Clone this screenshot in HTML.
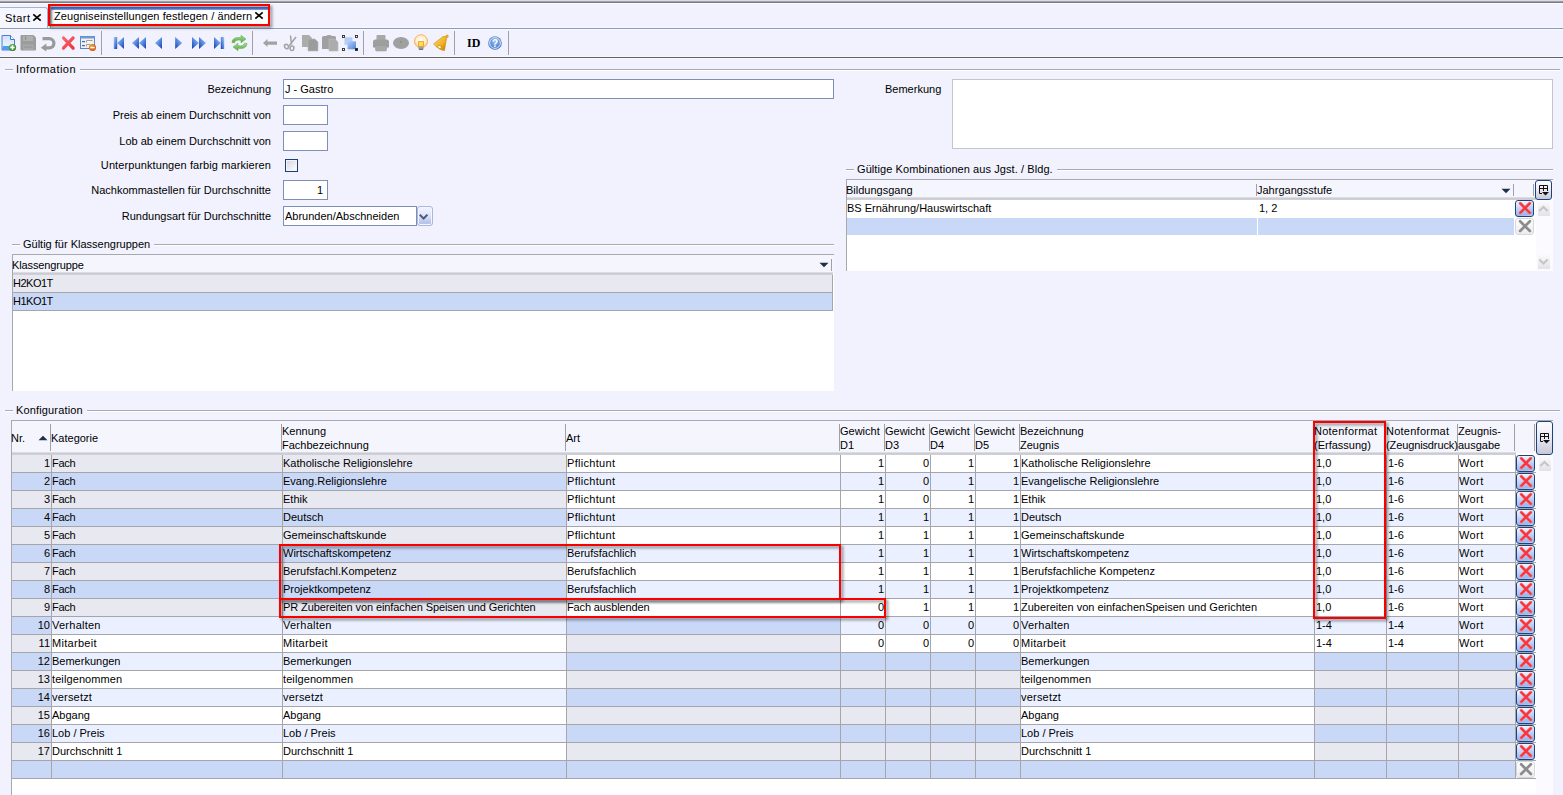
<!DOCTYPE html>
<html lang="de"><head><meta charset="utf-8"><title>Zeugniseinstellungen festlegen / ändern</title>
<style>
*{box-sizing:border-box;margin:0;padding:0}
html,body{width:1563px;height:795px;overflow:hidden;background:#f1f2fd}
body{position:relative;font-family:"Liberation Sans",sans-serif;font-size:11px;color:#000;line-height:13px}
.a{position:absolute;white-space:nowrap}
.lbl{position:absolute;white-space:nowrap;text-align:right;right:1292px}
.inp{position:absolute;background:#fff;border:1px solid #7b8fb8;height:20px}
.gl{position:absolute;height:2px;background:linear-gradient(#a9a9b1 50%,#fff 50%)}
.gt{position:absolute;white-space:nowrap;background:#f1f2fd;padding:0 4px 0 3px}
.c{position:absolute;height:17px;line-height:17px;white-space:nowrap;overflow:hidden;padding-left:0}
.r{text-align:right;padding-right:1px;padding-left:0}
.vl{position:absolute;width:1px;background:#a6a6aa}
.hl{position:absolute;height:1px;background:#a6a6aa}
.red{position:absolute;border:2px solid #f80000;filter:drop-shadow(2px 2px 1.5px rgba(0,0,0,.5))}
.hs{position:absolute;width:1px;background:#a0a0a8}
</style></head>
<body>
<div class="a" style="left:0;top:0;width:1563px;height:1px;background:#dcdae8"></div>
<div class="a" style="left:0;top:1px;width:1563px;height:1px;background:#a2a2a6"></div>
<div class="a" style="left:0;top:2px;width:1563px;height:1px;background:#7c7c7e"></div>
<div class="a" style="left:0;top:3px;width:1563px;height:1px;background:#fafaff"></div>
<div class="a" style="left:0;top:27px;width:1563px;height:3px;background:#f8f8ff"></div>
<div class="a" style="left:0;top:28px;width:1563px;height:1px;background:#8a9dba"></div>
<div class="a" style="left:-1px;top:7px;width:49px;height:21px;border:1px solid #9fb4d0;border-bottom:none;border-radius:0 3px 0 0;background:#f6f6fe"></div>
<div class="a" style="left:5px;top:12px;letter-spacing:.45px">Start</div>
<svg class="a" style="left:32px;top:13px" width="10" height="10" viewBox="0 0 10 10"><path d="M1.3 1.3L8.7 7.700M8.700 1.300L1.300 7.700" stroke="#000" stroke-width="1.700" fill="none"/></svg>
<div class="a" style="left:50px;top:6px;width:220px;height:22px;background:#dde3e3"></div>
<div class="a" style="left:50px;top:6px;width:219px;height:20px;background:#fff"></div>
<div class="a" style="left:50px;top:6px;width:219px;height:1px;background:#e0e4f0"></div>
<div class="a" style="left:50px;top:7px;width:219px;height:3px;background:linear-gradient(#5577dc,#5f83e2 55%,#97b3f4)"></div>
<div class="a" style="left:50px;top:6px;width:1px;height:22px;background:#9a9ea8"></div>
<div class="a" style="left:51px;top:10px;width:1px;height:16px;background:#d8dade"></div>
<div class="a" style="left:54px;top:10px;letter-spacing:.08px">Zeugniseinstellungen festlegen / ändern</div>
<svg class="a" style="left:254px;top:11px" width="10" height="10" viewBox="0 0 10 10"><path d="M1.300 1.300L8.700 7.700M8.700 1.300L1.300 7.700" stroke="#000" stroke-width="1.700" fill="none"/></svg>
<div class="red" style="left:48px;top:4px;width:222px;height:22px"></div>
<div class="a" style="left:0;top:56px;width:1563px;height:3px;background:#f8f8ff"></div>
<div class="a" style="left:0;top:57px;width:1563px;height:1px;background:#626264"></div>
<div class="a" style="left:101px;top:31px;width:1px;height:24px;background:#a0a0a6"></div>
<div class="a" style="left:252px;top:31px;width:1px;height:24px;background:#a0a0a6"></div>
<div class="a" style="left:363px;top:31px;width:1px;height:24px;background:#a0a0a6"></div>
<div class="a" style="left:454px;top:31px;width:1px;height:24px;background:#a0a0a6"></div>
<div class="a" style="left:508px;top:31px;width:1px;height:24px;background:#a0a0a6"></div>
<svg class="a" style="left:0;top:30px" width="520" height="26" viewBox="0 30 520 26">
<defs>
<linearGradient id="gdoc" x1="0" y1="0" x2="0" y2="1"><stop offset="0" stop-color="#cfe2fa"/><stop offset=".7" stop-color="#e8f2fd"/><stop offset="1" stop-color="#5aa8f0"/></linearGradient>
<linearGradient id="gnav" x1="0" y1="0" x2="1" y2="1"><stop offset="0" stop-color="#a8c8f4"/><stop offset=".5" stop-color="#5a8ee0"/><stop offset="1" stop-color="#1838b0"/></linearGradient>
<linearGradient id="gnavr" x1="1" y1="0" x2="0" y2="1"><stop offset="0" stop-color="#a8c8f4"/><stop offset=".5" stop-color="#5a8ee0"/><stop offset="1" stop-color="#1838b0"/></linearGradient>
<radialGradient id="ggrn" cx=".4" cy=".35" r=".7"><stop offset="0" stop-color="#7cc060"/><stop offset="1" stop-color="#2a7a1a"/></radialGradient>
<radialGradient id="gorg" cx=".4" cy=".35" r=".7"><stop offset="0" stop-color="#f8a040"/><stop offset="1" stop-color="#c85000"/></radialGradient>
<linearGradient id="gred" x1="0" y1="0" x2="1" y2="1"><stop offset="0" stop-color="#ff8a90"/><stop offset="1" stop-color="#ee2028"/></linearGradient>
<linearGradient id="gsel" x1="0" y1="0" x2="1" y2="1"><stop offset="0" stop-color="#b8d0f8"/><stop offset="1" stop-color="#4a80e0"/></linearGradient>
<radialGradient id="gbulb" cx=".5" cy=".45" r=".6"><stop offset="0" stop-color="#ffffff"/><stop offset=".6" stop-color="#fff0c8"/><stop offset="1" stop-color="#f0a850"/></radialGradient>
<linearGradient id="gbell" x1="0" y1="0" x2="1" y2="1"><stop offset="0" stop-color="#ffe070"/><stop offset=".6" stop-color="#f0b020"/><stop offset="1" stop-color="#b87800"/></linearGradient>
<radialGradient id="ghelp" cx=".5" cy=".4" r=".6"><stop offset="0" stop-color="#9cc0f0"/><stop offset="1" stop-color="#3a70c8"/></radialGradient>
<linearGradient id="ggreen" x1="0" y1="0" x2="0" y2="1"><stop offset="0" stop-color="#a4dc8c"/><stop offset="1" stop-color="#56aa48"/></linearGradient>
</defs>
<!-- new doc -->
<path d="M2 35.500H10.500L14.500 39.500V50H2Z" fill="url(#gdoc)" stroke="#4a80d4" stroke-width="1" stroke-linejoin="round"/>
<path d="M10.5 35.5V39.5H14.5" fill="#fff" stroke="#3a78d0" stroke-width="1"/>
<rect x="3" y="46" width="7" height="3" fill="#48a0f0"/>
<circle cx="12.5" cy="47.5" r="3.6" fill="url(#ggrn)"/>
<path d="M12.5 45.3V49.7M10.3 47.5H14.7" stroke="#fff" stroke-width="1.5"/>
<!-- save -->
<path d="M20.5 36Q20.5 35 21.5 35H33.5L36 37.5V49.5Q36 50.5 35 50.5H21.5Q20.5 50.5 20.5 49.5Z" fill="#9c9c9c"/>
<rect x="23" y="36" width="10" height="5" fill="#b0b0b0"/><rect x="25" y="36.5" width="1.2" height="3.2" fill="#8a8a8a"/>
<rect x="23" y="44.5" width="10.5" height="5.5" fill="#a8a8a8"/><rect x="24" y="46.5" width="8.5" height="1" fill="#949494"/>
<!-- undo -->
<path d="M42.500 38.700H49.300A4.600 4.600 0 0 1 49.300 47.900H46" fill="none" stroke="#9a9a9a" stroke-width="3.300"/>
<path d="M40.800 47.700L46.300 43.400V51.500Z" fill="#9a9a9a"/>
<!-- red X -->
<path d="M63.5 38L73 48M73 38L63.5 48" stroke="url(#gred)" stroke-width="3.2" stroke-linecap="round"/>
<path d="M63.5 38L73 48M73 38L63.5 48" stroke="#f6484e" stroke-width="3.2" stroke-linecap="round" opacity=".5"/>
<!-- form minus -->
<rect x="80.5" y="36.5" width="14" height="12" fill="#f4f0e6" stroke="#5a88d0" stroke-width="1"/>
<rect x="80.5" y="36.5" width="14" height="2" fill="#6a9ce0"/>
<rect x="82" y="41" width="3" height="1.2" fill="#3a68c8"/><rect x="82" y="45" width="3" height="1.2" fill="#3a68c8"/>
<path d="M86.5 42.5V40.5H92.5M86.5 46.5V44.5H90" stroke="#a0a0a0" stroke-width="1" fill="#fff"/>
<circle cx="92.5" cy="47.5" r="3.5" fill="url(#gorg)"/><rect x="90.3" y="46.8" width="4.4" height="1.5" fill="#fff"/>
<!-- nav -->
<rect x="113.8" y="37" width="3.4" height="12" fill="url(#gnav)"/><path d="M124 37V49L117.2 43Z" fill="url(#gnav)"/>
<path d="M139 37V49L132 43Z" fill="url(#gnav)"/><path d="M146 37V49L139 43Z" fill="url(#gnav)"/>
<path d="M162 37V49L155 43Z" fill="url(#gnav)"/>
<path d="M175.2 37V49L182.2 43Z" fill="url(#gnavr)"/>
<path d="M192 37V49L199 43Z" fill="url(#gnavr)"/><path d="M199 37V49L206 43Z" fill="url(#gnavr)"/>
<path d="M214 37V49L220.8 43Z" fill="url(#gnavr)"/><rect x="220.8" y="37" width="3.4" height="12" fill="url(#gnavr)"/>
<!-- refresh -->
<path d="M232 42.5C232 38.5 236 36.8 241 37.8V35.3L246 39L241 42.8V40.4C237.5 39.6 235 40.5 234.6 42.8Z" fill="url(#ggreen)" stroke="#58a84c" stroke-width=".5"/>
<path d="M247 43.5C247 47.5 243 49.2 238 48.2V50.7L233 47L238 43.2V45.6C241.500 46.4 244 45.5 244.400 43.200Z" fill="url(#ggreen)" stroke="#58a84c" stroke-width=".5"/>
<!-- left arrow -->
<path d="M263 43L267.500 39V41.500H277V44.700H267.500V47Z" fill="#a2a2a2"/>
<!-- scissors -->
<path d="M290.500 35.500L291.500 44.500M296 37L289 46" stroke="#a2a2a2" stroke-width="1.500" fill="none"/>
<ellipse cx="286.500" cy="46.500" rx="1.900" ry="2.300" fill="none" stroke="#a2a2a2" stroke-width="1.500" transform="rotate(-30 286.500 46.500)"/>
<ellipse cx="292" cy="48.300" rx="1.900" ry="2.300" fill="none" stroke="#a2a2a2" stroke-width="1.500" transform="rotate(10 292 48.300)"/>
<!-- copy -->
<path d="M302 35H309L312 38V47H302Z" fill="#acacac"/>
<path d="M308 39H315L318 42V51H308Z" fill="#9c9c9c" stroke="#b8b8b8" stroke-width=".6"/>
<!-- paste -->
<path d="M322 37.500Q322 36 324 36H326Q327 35 329 35Q331 35 332 36H334Q336 36 336 37.500V49H322Z" fill="#a0a0a0"/>
<path d="M329 39H335L338 42V51H329Z" fill="#acacac" stroke="#bcbcbc" stroke-width=".6"/>
<!-- select -->
<rect x="344.500" y="37.300" width="8" height="7.500" fill="#b4ccf6"/><rect x="347.500" y="41.300" width="8.500" height="8" fill="url(#gsel)"/>
<g fill="#fff" stroke="#2a2a2a" stroke-width=".9"><rect x="342.500" y="35.500" width="2" height="2"/><rect x="355.500" y="35.500" width="2" height="2"/><rect x="342.500" y="48.500" width="2" height="2"/><rect x="355.500" y="48.500" width="2" height="2" fill="#111"/></g>
<!-- printer -->
<path d="M376.500 36Q376.500 35 377.500 35H384.500Q385.500 35 385.500 36V40H376.500Z" fill="#a8a8a8"/>
<path d="M373 42Q373 39.500 375.500 39.500H386.500Q389 39.500 389 42V47.500H373Z" fill="#9e9e9e"/>
<path d="M375.500 45.500H386.500V50Q386.500 51 385.500 51H376.500Q375.500 51 375.500 50Z" fill="#a8a8a8" stroke="#949494" stroke-width=".5"/>
<!-- ellipse -->
<ellipse cx="401" cy="43" rx="8" ry="6" fill="#a0a0a0"/><circle cx="401" cy="42" r=".9" fill="#888"/>
<!-- bulb -->
<circle cx="421" cy="41.300" r="6.600" fill="url(#gbulb)" stroke="#f4b070" stroke-width=".9"/>
<path d="M418.500 41.500H423.500V46.500H418.500Z" fill="#ffe048" stroke="#f09030" stroke-width=".8"/>
<rect x="418.500" y="46.500" width="5" height="3" fill="#a0a0a0"/><rect x="419" y="48.800" width="4" height="1" fill="#606060"/>
<!-- bell -->
<path d="M433.500 44L443 36.500Q446 35.800 446.500 38.500L444.500 50.500Q440 50.800 433.500 44Z" fill="url(#gbell)" stroke="#c88a10" stroke-width=".6"/>
<circle cx="447" cy="36.300" r="1.300" fill="#f0b020" stroke="#c88a10" stroke-width=".5"/>
<ellipse cx="439.500" cy="47" rx="2" ry="1.400" fill="#fff4c0" stroke="#b87800" stroke-width=".5" transform="rotate(40 439.500 47)"/>
<!-- help -->
<circle cx="495" cy="43" r="6.800" fill="url(#ghelp)"/><circle cx="495" cy="43" r="5.400" fill="none" stroke="#e8f0fc" stroke-width=".9"/>
<text x="495" y="46.800" font-family="Liberation Sans, sans-serif" font-weight="bold" font-size="10" text-anchor="middle" fill="#fff">?</text>
</svg>
<div class="a" style="left:467px;top:36px;font:bold 12px 'Liberation Serif',serif;line-height:14px;color:#000">ID</div>

<div class="gl" style="left:5px;top:69px;width:1555px"></div>
<div class="gt" style="left:13px;top:63px;letter-spacing:0.45px">Information</div>
<div class="lbl" style="top:83px">Bezeichnung</div>
<div class="lbl" style="top:109px">Preis ab einem Durchschnitt von</div>
<div class="lbl" style="top:135px">Lob ab einem Durchschnitt von</div>
<div class="lbl" style="top:159px;letter-spacing:.1px">Unterpunktungen farbig markieren</div>
<div class="lbl" style="top:184px">Nachkommastellen für Durchschnitte</div>
<div class="lbl" style="top:210px">Rundungsart für Durchschnitte</div>
<div class="inp" style="left:283px;top:79px;width:551px"></div>
<div class="a" style="left:285px;top:83px">J - Gastro</div>
<div class="inp" style="left:283px;top:105px;width:45px"></div>
<div class="inp" style="left:283px;top:131px;width:45px"></div>
<div class="a" style="left:285px;top:159px;width:13px;height:13px;border:1px solid #1c3d78;background:linear-gradient(135deg,#d4d4da,#fafafc 85%);box-shadow:inset 0 0 0 1px #f4f4f8"></div>
<div class="inp" style="left:283px;top:180px;width:45px"></div>
<div class="a" style="left:283px;top:184px;width:40px;text-align:right">1</div>
<div class="inp" style="left:283px;top:206px;width:134px"></div>
<div class="a" style="left:285px;top:210px">Abrunden/Abschneiden</div>
<div class="a" style="left:417px;top:206px;width:16px;height:20px;border:1px solid #aab6dc;border-radius:3px;background:linear-gradient(#f2f4ff,#dfe5fa 45%,#b4c2e8 90%,#c8d2f0);box-shadow:inset 0 0 0 1px #f4f6ff"></div>
<svg class="a" style="left:419px;top:213px" width="10" height="8" viewBox="0 0 10 8"><path d="M0.800 1.600L4.600 5.600L8.400 1.600" stroke="#4a587c" stroke-width="2.100" fill="none"/></svg>
<div class="a" style="left:885px;top:83px">Bemerkung</div>
<div class="a" style="left:952px;top:79px;width:601px;height:70px;background:#fff;border:1px solid #c4c4cc"></div>
<div class="gl" style="left:12px;top:244px;width:822px"></div>
<div class="gt" style="left:20px;top:238px;letter-spacing:0px">Gültig für Klassengruppen</div>
<div class="a" style="left:12px;top:254px;width:822px;height:137px;background:#fff;border-left:1px solid #a9a9ad;border-top:1px solid #a9a9ad"></div>
<div class="a" style="left:13px;top:255px;width:821px;height:18px;background:#f5f5fe"></div>
<div class="a" style="left:13px;top:272px;width:820px;height:3px;background:linear-gradient(#e4e4ec,#cbcbd2 50%,#c8c8ce 70%,#d8d8de)"></div>
<div class="a" style="left:12px;top:259px;letter-spacing:-.13px">Klassengruppe</div>
<div class="hs" style="left:831px;top:259px;height:12px"></div>
<svg class="a" style="left:819px;top:262px" width="10" height="6" viewBox="0 0 10 6"><path d="M0.5 0.8L9.5 0.8L5 5.2Z" fill="#1c3048"/></svg>
<div class="c" style="left:13px;top:275px;width:819px;background:#e8e8f1;letter-spacing:-.5px">H2KO1T</div>
<div class="c" style="left:13px;top:293px;width:819px;background:#c9d8f6;letter-spacing:-.5px">H1KO1T</div>
<div class="hl" style="left:13px;top:292px;width:820px"></div>
<div class="hl" style="left:13px;top:310px;width:820px"></div>
<div class="vl" style="left:832px;top:275px;height:36px"></div>
<div class="gl" style="left:846px;top:169px;width:707px"></div>
<div class="gt" style="left:854px;top:163px;letter-spacing:0.08px">Gültige Kombinationen aus Jgst. / Bldg.</div>
<div class="a" style="left:846px;top:179px;width:707px;height:92px;background:#fff;border-left:1px solid #a9a9ad;border-top:1px solid #a9a9ad"></div>
<div class="a" style="left:847px;top:180px;width:706px;height:18px;background:#f5f5fe"></div>
<div class="a" style="left:847px;top:197px;width:689px;height:3px;background:linear-gradient(#e4e4ec,#cbcbd2 50%,#c8c8ce 70%,#d8d8de)"></div>
<div class="a" style="left:846px;top:184px">Bildungsgang</div>
<div class="a" style="left:1257px;top:184px">Jahrgangsstufe</div>
<div class="hs" style="left:1256px;top:184px;height:12px"></div>
<div class="hs" style="left:1513px;top:184px;height:12px"></div>
<div class="hs" style="left:1533px;top:184px;height:12px"></div>
<svg class="a" style="left:1501px;top:188px" width="10" height="6" viewBox="0 0 10 6"><path d="M0.5 0.8L9.5 0.8L5 5.2Z" fill="#1c3048"/></svg>
<div class="c" style="left:847px;top:200px;width:410px;height:18px;background:#fff">BS Ernährung/Hauswirtschaft</div>
<div class="c" style="left:1258px;top:200px;width:256px;height:18px;background:#fff;padding-left:1px">1, 2</div>
<div class="c" style="left:847px;top:218px;width:410px;background:#c9d8f6"></div>
<div class="c" style="left:1258px;top:218px;width:256px;background:#c9d8f6"></div>
<div class="a" style="left:1515px;top:200px;width:19px;height:17px;border:1px solid #1c4280;border-radius:3px;background:linear-gradient(172deg,#f6f8ff 4%,#c6d6f7 42%,#9ab6ee 86%,#c4d6fa)"></div>
<svg class="a" style="left:1517px;top:201px" width="16" height="15" viewBox="0 0 16 15"><path d="M3.100 2.200L12.900 12M12.900 2.200L3.100 12" stroke="#ff8890" stroke-width="3.200" stroke-linecap="round" fill="none" opacity=".8"/><path d="M3.300 2.400L12.700 11.800M12.700 2.400L3.300 11.800" stroke="#f6363e" stroke-width="2.300" stroke-linecap="round" fill="none"/></svg>
<div class="a" style="left:1515px;top:218px;width:19px;height:17px;border:1px solid #d6d6dc;border-radius:3px;background:linear-gradient(#ffffff,#ececf0)"></div>
<svg class="a" style="left:1517px;top:219px" width="16" height="15" viewBox="0 0 16 15"><path d="M3.100 2.200L12.900 12M12.900 2.200L3.100 12" stroke="#8c8c8c" stroke-width="2.700" stroke-linecap="round" fill="none"/></svg>
<div class="a" style="left:1536px;top:200px;width:17px;height:71px;background:#fafaff"></div>
<div class="a" style="left:1538px;top:201px;width:12px;height:15px;background:linear-gradient(#fbfbfd,#e3e3e7)"></div>
<svg class="a" style="left:1538px;top:201px" width="12" height="15" viewBox="0 0 12 15"><path d="M1.300 10L5.500 6L9.700 10" stroke="#c6c6c8" stroke-width="2.200" fill="none"/></svg>
<div class="a" style="left:1538px;top:254px;width:12px;height:15px;background:linear-gradient(#fbfbfd,#e3e3e7)"></div>
<svg class="a" style="left:1538px;top:254px" width="12" height="15" viewBox="0 0 12 15"><path d="M1.300 5.500L5.500 9.500L9.700 5.500" stroke="#c6c6c8" stroke-width="2.200" fill="none"/></svg>
<div class="a" style="left:1535px;top:180px;width:17px;height:20px;border:1px solid #1c4280;border-radius:3px;background:linear-gradient(#fcfcfe,#ececf4 45%,#c8c8d8)"></div>
<svg class="a" style="left:1539px;top:185px" width="10" height="11" viewBox="0 0 10 11"><path d="M0.5 0.5H8.5V6M0.5 0.5V8.5H3M0.5 3.5H8.5M4.5 0.5V6" stroke="#111" stroke-width="1" fill="none"/><path d="M3 7H10L6.5 10.5Z" fill="#111"/></svg>
<div class="gl" style="left:5px;top:410px;width:1555px"></div>
<div class="gt" style="left:13px;top:404px;letter-spacing:0.15px">Konfiguration</div>
<div class="a" style="left:11px;top:420px;width:1542px;height:375px;background:#fff;border-left:1px solid #a9a9ad;border-top:1px solid #a9a9ad"></div>
<div class="a" style="left:12px;top:421px;width:1524px;height:32px;background:#f5f5fe"></div>
<div class="a" style="left:12px;top:452px;width:1504px;height:3px;background:linear-gradient(#e4e4ec,#cbcbd2 50%,#c8c8ce 70%,#d8d8de)"></div>
<div class="hs" style="left:50px;top:424px;height:27px"></div>
<div class="hs" style="left:281px;top:424px;height:27px"></div>
<div class="hs" style="left:565px;top:424px;height:27px"></div>
<div class="hs" style="left:839px;top:424px;height:27px"></div>
<div class="hs" style="left:884px;top:424px;height:27px"></div>
<div class="hs" style="left:929px;top:424px;height:27px"></div>
<div class="hs" style="left:974px;top:424px;height:27px"></div>
<div class="hs" style="left:1019px;top:424px;height:27px"></div>
<div class="hs" style="left:1313px;top:424px;height:27px"></div>
<div class="hs" style="left:1385px;top:424px;height:27px"></div>
<div class="hs" style="left:1457px;top:424px;height:27px"></div>
<div class="hs" style="left:1514px;top:424px;height:27px"></div>
<div class="hs" style="left:1534px;top:424px;height:27px"></div>
<div class="a" style="left:11px;top:432px">Nr.</div>
<svg class="a" style="left:38px;top:435px" width="10" height="6" viewBox="0 0 10 6"><path d="M0.5 5.2L9.5 5.2L5 0.8Z" fill="#1c3048"/></svg>
<div class="a" style="left:51px;top:432px">Kategorie</div>
<div class="a" style="left:282px;top:425px">Kennung</div>
<div class="a" style="left:282px;top:439px">Fachbezeichnung</div>
<div class="a" style="left:566px;top:432px">Art</div>
<div class="a" style="left:840px;top:425px">Gewicht</div>
<div class="a" style="left:840px;top:439px">D1</div>
<div class="a" style="left:885px;top:425px">Gewicht</div>
<div class="a" style="left:885px;top:439px">D3</div>
<div class="a" style="left:930px;top:425px">Gewicht</div>
<div class="a" style="left:930px;top:439px">D4</div>
<div class="a" style="left:975px;top:425px">Gewicht</div>
<div class="a" style="left:975px;top:439px">D5</div>
<div class="a" style="left:1020px;top:425px">Bezeichnung</div>
<div class="a" style="left:1020px;top:439px">Zeugnis</div>
<div class="a" style="left:1314px;top:425px"><span style="letter-spacing:.25px">Notenformat</span></div>
<div class="a" style="left:1314px;top:439px">(Erfassung)</div>
<div class="a" style="left:1386px;top:425px"><span style="letter-spacing:.25px">Notenformat</span></div>
<div class="a" style="left:1386px;top:439px"><span style="letter-spacing:-.12px">(Zeugnisdruck)</span></div>
<div class="a" style="left:1458px;top:425px">Zeugnis-</div>
<div class="a" style="left:1458px;top:439px">ausgabe</div>
<div class="c r" style="left:12px;top:455px;width:39px;background:#e8e8f1">1</div>
<div class="c" style="left:52px;top:455px;width:230px;background:#e8e8f1;letter-spacing:-0.25px">Fach</div>
<div class="c" style="left:283px;top:455px;width:283px;background:#e8e8f1">Katholische Religionslehre</div>
<div class="c" style="left:567px;top:455px;width:273px;background:#ffffff;letter-spacing:0.3px">Pflichtunt</div>
<div class="c r" style="left:841px;top:455px;width:44px;background:#ffffff">1</div>
<div class="c r" style="left:886px;top:455px;width:44px;background:#ffffff">0</div>
<div class="c r" style="left:931px;top:455px;width:44px;background:#ffffff">1</div>
<div class="c r" style="left:976px;top:455px;width:44px;background:#ffffff">1</div>
<div class="c" style="left:1021px;top:455px;width:293px;background:#ffffff">Katholische Religionslehre</div>
<div class="c" style="left:1315px;top:455px;width:71px;background:#ffffff;padding-left:1px">1,0</div>
<div class="c" style="left:1387px;top:455px;width:71px;background:#ffffff;padding-left:1px">1-6</div>
<div class="c" style="left:1459px;top:455px;width:56px;background:#ffffff;letter-spacing:0.4px">Wort</div>
<div class="hl" style="left:12px;top:472px;width:1524px"></div>
<div class="a" style="left:1516px;top:455px;width:19px;height:17px;border:1px solid #1c4280;border-radius:3px;background:linear-gradient(172deg,#f6f8ff 4%,#c6d6f7 42%,#9ab6ee 86%,#c4d6fa)"></div>
<svg class="a" style="left:1518px;top:456px" width="16" height="15" viewBox="0 0 16 15"><path d="M3.100 2.200L12.900 12M12.900 2.200L3.100 12" stroke="#ff8890" stroke-width="3.200" stroke-linecap="round" fill="none" opacity=".8"/><path d="M3.300 2.400L12.700 11.800M12.700 2.400L3.300 11.800" stroke="#f6363e" stroke-width="2.300" stroke-linecap="round" fill="none"/></svg>
<div class="c r" style="left:12px;top:473px;width:39px;background:#c9d8f6">2</div>
<div class="c" style="left:52px;top:473px;width:230px;background:#c9d8f6;letter-spacing:-0.25px">Fach</div>
<div class="c" style="left:283px;top:473px;width:283px;background:#c9d8f6">Evang.Religionslehre</div>
<div class="c" style="left:567px;top:473px;width:273px;background:#eaf0ff;letter-spacing:0.3px">Pflichtunt</div>
<div class="c r" style="left:841px;top:473px;width:44px;background:#eaf0ff">1</div>
<div class="c r" style="left:886px;top:473px;width:44px;background:#eaf0ff">0</div>
<div class="c r" style="left:931px;top:473px;width:44px;background:#eaf0ff">1</div>
<div class="c r" style="left:976px;top:473px;width:44px;background:#eaf0ff">1</div>
<div class="c" style="left:1021px;top:473px;width:293px;background:#eaf0ff">Evangelische Religionslehre</div>
<div class="c" style="left:1315px;top:473px;width:71px;background:#eaf0ff;padding-left:1px">1,0</div>
<div class="c" style="left:1387px;top:473px;width:71px;background:#eaf0ff;padding-left:1px">1-6</div>
<div class="c" style="left:1459px;top:473px;width:56px;background:#eaf0ff;letter-spacing:0.4px">Wort</div>
<div class="hl" style="left:12px;top:490px;width:1524px"></div>
<div class="a" style="left:1516px;top:473px;width:19px;height:17px;border:1px solid #1c4280;border-radius:3px;background:linear-gradient(172deg,#f6f8ff 4%,#c6d6f7 42%,#9ab6ee 86%,#c4d6fa)"></div>
<svg class="a" style="left:1518px;top:474px" width="16" height="15" viewBox="0 0 16 15"><path d="M3.100 2.200L12.900 12M12.900 2.200L3.100 12" stroke="#ff8890" stroke-width="3.200" stroke-linecap="round" fill="none" opacity=".8"/><path d="M3.300 2.400L12.700 11.800M12.700 2.400L3.300 11.800" stroke="#f6363e" stroke-width="2.300" stroke-linecap="round" fill="none"/></svg>
<div class="c r" style="left:12px;top:491px;width:39px;background:#e8e8f1">3</div>
<div class="c" style="left:52px;top:491px;width:230px;background:#e8e8f1;letter-spacing:-0.25px">Fach</div>
<div class="c" style="left:283px;top:491px;width:283px;background:#e8e8f1">Ethik</div>
<div class="c" style="left:567px;top:491px;width:273px;background:#ffffff;letter-spacing:0.3px">Pflichtunt</div>
<div class="c r" style="left:841px;top:491px;width:44px;background:#ffffff">1</div>
<div class="c r" style="left:886px;top:491px;width:44px;background:#ffffff">0</div>
<div class="c r" style="left:931px;top:491px;width:44px;background:#ffffff">1</div>
<div class="c r" style="left:976px;top:491px;width:44px;background:#ffffff">1</div>
<div class="c" style="left:1021px;top:491px;width:293px;background:#ffffff">Ethik</div>
<div class="c" style="left:1315px;top:491px;width:71px;background:#ffffff;padding-left:1px">1,0</div>
<div class="c" style="left:1387px;top:491px;width:71px;background:#ffffff;padding-left:1px">1-6</div>
<div class="c" style="left:1459px;top:491px;width:56px;background:#ffffff;letter-spacing:0.4px">Wort</div>
<div class="hl" style="left:12px;top:508px;width:1524px"></div>
<div class="a" style="left:1516px;top:491px;width:19px;height:17px;border:1px solid #1c4280;border-radius:3px;background:linear-gradient(172deg,#f6f8ff 4%,#c6d6f7 42%,#9ab6ee 86%,#c4d6fa)"></div>
<svg class="a" style="left:1518px;top:492px" width="16" height="15" viewBox="0 0 16 15"><path d="M3.100 2.200L12.900 12M12.900 2.200L3.100 12" stroke="#ff8890" stroke-width="3.200" stroke-linecap="round" fill="none" opacity=".8"/><path d="M3.300 2.400L12.700 11.800M12.700 2.400L3.300 11.800" stroke="#f6363e" stroke-width="2.300" stroke-linecap="round" fill="none"/></svg>
<div class="c r" style="left:12px;top:509px;width:39px;background:#c9d8f6">4</div>
<div class="c" style="left:52px;top:509px;width:230px;background:#c9d8f6;letter-spacing:-0.25px">Fach</div>
<div class="c" style="left:283px;top:509px;width:283px;background:#c9d8f6">Deutsch</div>
<div class="c" style="left:567px;top:509px;width:273px;background:#eaf0ff;letter-spacing:0.3px">Pflichtunt</div>
<div class="c r" style="left:841px;top:509px;width:44px;background:#eaf0ff">1</div>
<div class="c r" style="left:886px;top:509px;width:44px;background:#eaf0ff">1</div>
<div class="c r" style="left:931px;top:509px;width:44px;background:#eaf0ff">1</div>
<div class="c r" style="left:976px;top:509px;width:44px;background:#eaf0ff">1</div>
<div class="c" style="left:1021px;top:509px;width:293px;background:#eaf0ff">Deutsch</div>
<div class="c" style="left:1315px;top:509px;width:71px;background:#eaf0ff;padding-left:1px">1,0</div>
<div class="c" style="left:1387px;top:509px;width:71px;background:#eaf0ff;padding-left:1px">1-6</div>
<div class="c" style="left:1459px;top:509px;width:56px;background:#eaf0ff;letter-spacing:0.4px">Wort</div>
<div class="hl" style="left:12px;top:526px;width:1524px"></div>
<div class="a" style="left:1516px;top:509px;width:19px;height:17px;border:1px solid #1c4280;border-radius:3px;background:linear-gradient(172deg,#f6f8ff 4%,#c6d6f7 42%,#9ab6ee 86%,#c4d6fa)"></div>
<svg class="a" style="left:1518px;top:510px" width="16" height="15" viewBox="0 0 16 15"><path d="M3.100 2.200L12.900 12M12.900 2.200L3.100 12" stroke="#ff8890" stroke-width="3.200" stroke-linecap="round" fill="none" opacity=".8"/><path d="M3.300 2.400L12.700 11.800M12.700 2.400L3.300 11.800" stroke="#f6363e" stroke-width="2.300" stroke-linecap="round" fill="none"/></svg>
<div class="c r" style="left:12px;top:527px;width:39px;background:#e8e8f1">5</div>
<div class="c" style="left:52px;top:527px;width:230px;background:#e8e8f1;letter-spacing:-0.25px">Fach</div>
<div class="c" style="left:283px;top:527px;width:283px;background:#e8e8f1">Gemeinschaftskunde</div>
<div class="c" style="left:567px;top:527px;width:273px;background:#ffffff;letter-spacing:0.3px">Pflichtunt</div>
<div class="c r" style="left:841px;top:527px;width:44px;background:#ffffff">1</div>
<div class="c r" style="left:886px;top:527px;width:44px;background:#ffffff">1</div>
<div class="c r" style="left:931px;top:527px;width:44px;background:#ffffff">1</div>
<div class="c r" style="left:976px;top:527px;width:44px;background:#ffffff">1</div>
<div class="c" style="left:1021px;top:527px;width:293px;background:#ffffff">Gemeinschaftskunde</div>
<div class="c" style="left:1315px;top:527px;width:71px;background:#ffffff;padding-left:1px">1,0</div>
<div class="c" style="left:1387px;top:527px;width:71px;background:#ffffff;padding-left:1px">1-6</div>
<div class="c" style="left:1459px;top:527px;width:56px;background:#ffffff;letter-spacing:0.4px">Wort</div>
<div class="hl" style="left:12px;top:544px;width:1524px"></div>
<div class="a" style="left:1516px;top:527px;width:19px;height:17px;border:1px solid #1c4280;border-radius:3px;background:linear-gradient(172deg,#f6f8ff 4%,#c6d6f7 42%,#9ab6ee 86%,#c4d6fa)"></div>
<svg class="a" style="left:1518px;top:528px" width="16" height="15" viewBox="0 0 16 15"><path d="M3.100 2.200L12.900 12M12.900 2.200L3.100 12" stroke="#ff8890" stroke-width="3.200" stroke-linecap="round" fill="none" opacity=".8"/><path d="M3.300 2.400L12.700 11.800M12.700 2.400L3.300 11.800" stroke="#f6363e" stroke-width="2.300" stroke-linecap="round" fill="none"/></svg>
<div class="c r" style="left:12px;top:545px;width:39px;background:#c9d8f6">6</div>
<div class="c" style="left:52px;top:545px;width:230px;background:#c9d8f6;letter-spacing:-0.25px">Fach</div>
<div class="c" style="left:283px;top:545px;width:283px;background:#c9d8f6">Wirtschaftskompetenz</div>
<div class="c" style="left:567px;top:545px;width:273px;background:#eaf0ff">Berufsfachlich</div>
<div class="c r" style="left:841px;top:545px;width:44px;background:#eaf0ff">1</div>
<div class="c r" style="left:886px;top:545px;width:44px;background:#eaf0ff">1</div>
<div class="c r" style="left:931px;top:545px;width:44px;background:#eaf0ff">1</div>
<div class="c r" style="left:976px;top:545px;width:44px;background:#eaf0ff">1</div>
<div class="c" style="left:1021px;top:545px;width:293px;background:#eaf0ff">Wirtschaftskompetenz</div>
<div class="c" style="left:1315px;top:545px;width:71px;background:#eaf0ff;padding-left:1px">1,0</div>
<div class="c" style="left:1387px;top:545px;width:71px;background:#eaf0ff;padding-left:1px">1-6</div>
<div class="c" style="left:1459px;top:545px;width:56px;background:#eaf0ff;letter-spacing:0.4px">Wort</div>
<div class="hl" style="left:12px;top:562px;width:1524px"></div>
<div class="a" style="left:1516px;top:545px;width:19px;height:17px;border:1px solid #1c4280;border-radius:3px;background:linear-gradient(172deg,#f6f8ff 4%,#c6d6f7 42%,#9ab6ee 86%,#c4d6fa)"></div>
<svg class="a" style="left:1518px;top:546px" width="16" height="15" viewBox="0 0 16 15"><path d="M3.100 2.200L12.900 12M12.900 2.200L3.100 12" stroke="#ff8890" stroke-width="3.200" stroke-linecap="round" fill="none" opacity=".8"/><path d="M3.300 2.400L12.700 11.800M12.700 2.400L3.300 11.800" stroke="#f6363e" stroke-width="2.300" stroke-linecap="round" fill="none"/></svg>
<div class="c r" style="left:12px;top:563px;width:39px;background:#e8e8f1">7</div>
<div class="c" style="left:52px;top:563px;width:230px;background:#e8e8f1;letter-spacing:-0.25px">Fach</div>
<div class="c" style="left:283px;top:563px;width:283px;background:#e8e8f1">Berufsfachl.Kompetenz</div>
<div class="c" style="left:567px;top:563px;width:273px;background:#ffffff">Berufsfachlich</div>
<div class="c r" style="left:841px;top:563px;width:44px;background:#ffffff">1</div>
<div class="c r" style="left:886px;top:563px;width:44px;background:#ffffff">1</div>
<div class="c r" style="left:931px;top:563px;width:44px;background:#ffffff">1</div>
<div class="c r" style="left:976px;top:563px;width:44px;background:#ffffff">1</div>
<div class="c" style="left:1021px;top:563px;width:293px;background:#ffffff">Berufsfachliche Kompetenz</div>
<div class="c" style="left:1315px;top:563px;width:71px;background:#ffffff;padding-left:1px">1,0</div>
<div class="c" style="left:1387px;top:563px;width:71px;background:#ffffff;padding-left:1px">1-6</div>
<div class="c" style="left:1459px;top:563px;width:56px;background:#ffffff;letter-spacing:0.4px">Wort</div>
<div class="hl" style="left:12px;top:580px;width:1524px"></div>
<div class="a" style="left:1516px;top:563px;width:19px;height:17px;border:1px solid #1c4280;border-radius:3px;background:linear-gradient(172deg,#f6f8ff 4%,#c6d6f7 42%,#9ab6ee 86%,#c4d6fa)"></div>
<svg class="a" style="left:1518px;top:564px" width="16" height="15" viewBox="0 0 16 15"><path d="M3.100 2.200L12.900 12M12.900 2.200L3.100 12" stroke="#ff8890" stroke-width="3.200" stroke-linecap="round" fill="none" opacity=".8"/><path d="M3.300 2.400L12.700 11.800M12.700 2.400L3.300 11.800" stroke="#f6363e" stroke-width="2.300" stroke-linecap="round" fill="none"/></svg>
<div class="c r" style="left:12px;top:581px;width:39px;background:#c9d8f6">8</div>
<div class="c" style="left:52px;top:581px;width:230px;background:#c9d8f6;letter-spacing:-0.25px">Fach</div>
<div class="c" style="left:283px;top:581px;width:283px;background:#c9d8f6">Projektkompetenz</div>
<div class="c" style="left:567px;top:581px;width:273px;background:#eaf0ff">Berufsfachlich</div>
<div class="c r" style="left:841px;top:581px;width:44px;background:#eaf0ff">1</div>
<div class="c r" style="left:886px;top:581px;width:44px;background:#eaf0ff">1</div>
<div class="c r" style="left:931px;top:581px;width:44px;background:#eaf0ff">1</div>
<div class="c r" style="left:976px;top:581px;width:44px;background:#eaf0ff">1</div>
<div class="c" style="left:1021px;top:581px;width:293px;background:#eaf0ff">Projektkompetenz</div>
<div class="c" style="left:1315px;top:581px;width:71px;background:#eaf0ff;padding-left:1px">1,0</div>
<div class="c" style="left:1387px;top:581px;width:71px;background:#eaf0ff;padding-left:1px">1-6</div>
<div class="c" style="left:1459px;top:581px;width:56px;background:#eaf0ff;letter-spacing:0.4px">Wort</div>
<div class="hl" style="left:12px;top:598px;width:1524px"></div>
<div class="a" style="left:1516px;top:581px;width:19px;height:17px;border:1px solid #1c4280;border-radius:3px;background:linear-gradient(172deg,#f6f8ff 4%,#c6d6f7 42%,#9ab6ee 86%,#c4d6fa)"></div>
<svg class="a" style="left:1518px;top:582px" width="16" height="15" viewBox="0 0 16 15"><path d="M3.100 2.200L12.900 12M12.900 2.200L3.100 12" stroke="#ff8890" stroke-width="3.200" stroke-linecap="round" fill="none" opacity=".8"/><path d="M3.300 2.400L12.700 11.800M12.700 2.400L3.300 11.800" stroke="#f6363e" stroke-width="2.300" stroke-linecap="round" fill="none"/></svg>
<div class="c r" style="left:12px;top:599px;width:39px;background:#e8e8f1">9</div>
<div class="c" style="left:52px;top:599px;width:230px;background:#e8e8f1;letter-spacing:-0.25px">Fach</div>
<div class="c" style="left:283px;top:599px;width:283px;background:#e8e8f1;letter-spacing:-.1px">PR Zubereiten von einfachen Speisen und Gerichten</div>
<div class="c" style="left:567px;top:599px;width:273px;background:#ffffff;letter-spacing:-0.13px">Fach ausblenden</div>
<div class="c r" style="left:841px;top:599px;width:44px;background:#ffffff">0</div>
<div class="c r" style="left:886px;top:599px;width:44px;background:#ffffff">1</div>
<div class="c r" style="left:931px;top:599px;width:44px;background:#ffffff">1</div>
<div class="c r" style="left:976px;top:599px;width:44px;background:#ffffff">1</div>
<div class="c" style="left:1021px;top:599px;width:293px;background:#ffffff">Zubereiten von einfachenSpeisen und Gerichten</div>
<div class="c" style="left:1315px;top:599px;width:71px;background:#ffffff;padding-left:1px">1,0</div>
<div class="c" style="left:1387px;top:599px;width:71px;background:#ffffff;padding-left:1px">1-6</div>
<div class="c" style="left:1459px;top:599px;width:56px;background:#ffffff;letter-spacing:0.4px">Wort</div>
<div class="hl" style="left:12px;top:616px;width:1524px"></div>
<div class="a" style="left:1516px;top:599px;width:19px;height:17px;border:1px solid #1c4280;border-radius:3px;background:linear-gradient(172deg,#f6f8ff 4%,#c6d6f7 42%,#9ab6ee 86%,#c4d6fa)"></div>
<svg class="a" style="left:1518px;top:600px" width="16" height="15" viewBox="0 0 16 15"><path d="M3.100 2.200L12.900 12M12.900 2.200L3.100 12" stroke="#ff8890" stroke-width="3.200" stroke-linecap="round" fill="none" opacity=".8"/><path d="M3.300 2.400L12.700 11.800M12.700 2.400L3.300 11.800" stroke="#f6363e" stroke-width="2.300" stroke-linecap="round" fill="none"/></svg>
<div class="c r" style="left:12px;top:617px;width:39px;background:#c9d8f6">10</div>
<div class="c" style="left:52px;top:617px;width:230px;background:#eaf0ff;letter-spacing:0.25px">Verhalten</div>
<div class="c" style="left:283px;top:617px;width:283px;background:#eaf0ff;letter-spacing:0.25px">Verhalten</div>
<div class="c" style="left:567px;top:617px;width:273px;background:#c9d8f6"></div>
<div class="c r" style="left:841px;top:617px;width:44px;background:#eaf0ff">0</div>
<div class="c r" style="left:886px;top:617px;width:44px;background:#eaf0ff">0</div>
<div class="c r" style="left:931px;top:617px;width:44px;background:#eaf0ff">0</div>
<div class="c r" style="left:976px;top:617px;width:44px;background:#eaf0ff">0</div>
<div class="c" style="left:1021px;top:617px;width:293px;background:#eaf0ff;letter-spacing:0.25px">Verhalten</div>
<div class="c" style="left:1315px;top:617px;width:71px;background:#eaf0ff;padding-left:1px">1-4</div>
<div class="c" style="left:1387px;top:617px;width:71px;background:#eaf0ff;padding-left:1px">1-4</div>
<div class="c" style="left:1459px;top:617px;width:56px;background:#eaf0ff;letter-spacing:0.4px">Wort</div>
<div class="hl" style="left:12px;top:634px;width:1524px"></div>
<div class="a" style="left:1516px;top:617px;width:19px;height:17px;border:1px solid #1c4280;border-radius:3px;background:linear-gradient(172deg,#f6f8ff 4%,#c6d6f7 42%,#9ab6ee 86%,#c4d6fa)"></div>
<svg class="a" style="left:1518px;top:618px" width="16" height="15" viewBox="0 0 16 15"><path d="M3.100 2.200L12.900 12M12.900 2.200L3.100 12" stroke="#ff8890" stroke-width="3.200" stroke-linecap="round" fill="none" opacity=".8"/><path d="M3.300 2.400L12.700 11.800M12.700 2.400L3.300 11.800" stroke="#f6363e" stroke-width="2.300" stroke-linecap="round" fill="none"/></svg>
<div class="c r" style="left:12px;top:635px;width:39px;background:#e8e8f1">11</div>
<div class="c" style="left:52px;top:635px;width:230px;background:#ffffff;letter-spacing:0.3px">Mitarbeit</div>
<div class="c" style="left:283px;top:635px;width:283px;background:#ffffff;letter-spacing:0.3px">Mitarbeit</div>
<div class="c" style="left:567px;top:635px;width:273px;background:#e8e8f1"></div>
<div class="c r" style="left:841px;top:635px;width:44px;background:#ffffff">0</div>
<div class="c r" style="left:886px;top:635px;width:44px;background:#ffffff">0</div>
<div class="c r" style="left:931px;top:635px;width:44px;background:#ffffff">0</div>
<div class="c r" style="left:976px;top:635px;width:44px;background:#ffffff">0</div>
<div class="c" style="left:1021px;top:635px;width:293px;background:#ffffff;letter-spacing:0.3px">Mitarbeit</div>
<div class="c" style="left:1315px;top:635px;width:71px;background:#ffffff;padding-left:1px">1-4</div>
<div class="c" style="left:1387px;top:635px;width:71px;background:#ffffff;padding-left:1px">1-4</div>
<div class="c" style="left:1459px;top:635px;width:56px;background:#ffffff;letter-spacing:0.4px">Wort</div>
<div class="hl" style="left:12px;top:652px;width:1524px"></div>
<div class="a" style="left:1516px;top:635px;width:19px;height:17px;border:1px solid #1c4280;border-radius:3px;background:linear-gradient(172deg,#f6f8ff 4%,#c6d6f7 42%,#9ab6ee 86%,#c4d6fa)"></div>
<svg class="a" style="left:1518px;top:636px" width="16" height="15" viewBox="0 0 16 15"><path d="M3.100 2.200L12.900 12M12.900 2.200L3.100 12" stroke="#ff8890" stroke-width="3.200" stroke-linecap="round" fill="none" opacity=".8"/><path d="M3.300 2.400L12.700 11.800M12.700 2.400L3.300 11.800" stroke="#f6363e" stroke-width="2.300" stroke-linecap="round" fill="none"/></svg>
<div class="c r" style="left:12px;top:653px;width:39px;background:#c9d8f6">12</div>
<div class="c" style="left:52px;top:653px;width:230px;background:#eaf0ff">Bemerkungen</div>
<div class="c" style="left:283px;top:653px;width:283px;background:#eaf0ff">Bemerkungen</div>
<div class="c" style="left:567px;top:653px;width:273px;background:#c9d8f6"></div>
<div class="c r" style="left:841px;top:653px;width:44px;background:#c9d8f6"></div>
<div class="c r" style="left:886px;top:653px;width:44px;background:#c9d8f6"></div>
<div class="c r" style="left:931px;top:653px;width:44px;background:#c9d8f6"></div>
<div class="c r" style="left:976px;top:653px;width:44px;background:#c9d8f6"></div>
<div class="c" style="left:1021px;top:653px;width:293px;background:#eaf0ff">Bemerkungen</div>
<div class="c" style="left:1315px;top:653px;width:71px;background:#c9d8f6;padding-left:1px"></div>
<div class="c" style="left:1387px;top:653px;width:71px;background:#c9d8f6;padding-left:1px"></div>
<div class="c" style="left:1459px;top:653px;width:56px;background:#c9d8f6"></div>
<div class="hl" style="left:12px;top:670px;width:1524px"></div>
<div class="a" style="left:1516px;top:653px;width:19px;height:17px;border:1px solid #1c4280;border-radius:3px;background:linear-gradient(172deg,#f6f8ff 4%,#c6d6f7 42%,#9ab6ee 86%,#c4d6fa)"></div>
<svg class="a" style="left:1518px;top:654px" width="16" height="15" viewBox="0 0 16 15"><path d="M3.100 2.200L12.900 12M12.900 2.200L3.100 12" stroke="#ff8890" stroke-width="3.200" stroke-linecap="round" fill="none" opacity=".8"/><path d="M3.300 2.400L12.700 11.800M12.700 2.400L3.300 11.800" stroke="#f6363e" stroke-width="2.300" stroke-linecap="round" fill="none"/></svg>
<div class="c r" style="left:12px;top:671px;width:39px;background:#e8e8f1">13</div>
<div class="c" style="left:52px;top:671px;width:230px;background:#ffffff;letter-spacing:0.1px">teilgenommen</div>
<div class="c" style="left:283px;top:671px;width:283px;background:#ffffff;letter-spacing:0.1px">teilgenommen</div>
<div class="c" style="left:567px;top:671px;width:273px;background:#e8e8f1"></div>
<div class="c r" style="left:841px;top:671px;width:44px;background:#e8e8f1"></div>
<div class="c r" style="left:886px;top:671px;width:44px;background:#e8e8f1"></div>
<div class="c r" style="left:931px;top:671px;width:44px;background:#e8e8f1"></div>
<div class="c r" style="left:976px;top:671px;width:44px;background:#e8e8f1"></div>
<div class="c" style="left:1021px;top:671px;width:293px;background:#ffffff;letter-spacing:0.1px">teilgenommen</div>
<div class="c" style="left:1315px;top:671px;width:71px;background:#e8e8f1;padding-left:1px"></div>
<div class="c" style="left:1387px;top:671px;width:71px;background:#e8e8f1;padding-left:1px"></div>
<div class="c" style="left:1459px;top:671px;width:56px;background:#e8e8f1"></div>
<div class="hl" style="left:12px;top:688px;width:1524px"></div>
<div class="a" style="left:1516px;top:671px;width:19px;height:17px;border:1px solid #1c4280;border-radius:3px;background:linear-gradient(172deg,#f6f8ff 4%,#c6d6f7 42%,#9ab6ee 86%,#c4d6fa)"></div>
<svg class="a" style="left:1518px;top:672px" width="16" height="15" viewBox="0 0 16 15"><path d="M3.100 2.200L12.900 12M12.900 2.200L3.100 12" stroke="#ff8890" stroke-width="3.200" stroke-linecap="round" fill="none" opacity=".8"/><path d="M3.300 2.400L12.700 11.800M12.700 2.400L3.300 11.800" stroke="#f6363e" stroke-width="2.300" stroke-linecap="round" fill="none"/></svg>
<div class="c r" style="left:12px;top:689px;width:39px;background:#c9d8f6">14</div>
<div class="c" style="left:52px;top:689px;width:230px;background:#eaf0ff;letter-spacing:0.2px">versetzt</div>
<div class="c" style="left:283px;top:689px;width:283px;background:#eaf0ff;letter-spacing:0.2px">versetzt</div>
<div class="c" style="left:567px;top:689px;width:273px;background:#c9d8f6"></div>
<div class="c r" style="left:841px;top:689px;width:44px;background:#c9d8f6"></div>
<div class="c r" style="left:886px;top:689px;width:44px;background:#c9d8f6"></div>
<div class="c r" style="left:931px;top:689px;width:44px;background:#c9d8f6"></div>
<div class="c r" style="left:976px;top:689px;width:44px;background:#c9d8f6"></div>
<div class="c" style="left:1021px;top:689px;width:293px;background:#eaf0ff;letter-spacing:0.2px">versetzt</div>
<div class="c" style="left:1315px;top:689px;width:71px;background:#c9d8f6;padding-left:1px"></div>
<div class="c" style="left:1387px;top:689px;width:71px;background:#c9d8f6;padding-left:1px"></div>
<div class="c" style="left:1459px;top:689px;width:56px;background:#c9d8f6"></div>
<div class="hl" style="left:12px;top:706px;width:1524px"></div>
<div class="a" style="left:1516px;top:689px;width:19px;height:17px;border:1px solid #1c4280;border-radius:3px;background:linear-gradient(172deg,#f6f8ff 4%,#c6d6f7 42%,#9ab6ee 86%,#c4d6fa)"></div>
<svg class="a" style="left:1518px;top:690px" width="16" height="15" viewBox="0 0 16 15"><path d="M3.100 2.200L12.900 12M12.900 2.200L3.100 12" stroke="#ff8890" stroke-width="3.200" stroke-linecap="round" fill="none" opacity=".8"/><path d="M3.300 2.400L12.700 11.800M12.700 2.400L3.300 11.800" stroke="#f6363e" stroke-width="2.300" stroke-linecap="round" fill="none"/></svg>
<div class="c r" style="left:12px;top:707px;width:39px;background:#e8e8f1">15</div>
<div class="c" style="left:52px;top:707px;width:230px;background:#ffffff">Abgang</div>
<div class="c" style="left:283px;top:707px;width:283px;background:#ffffff">Abgang</div>
<div class="c" style="left:567px;top:707px;width:273px;background:#e8e8f1"></div>
<div class="c r" style="left:841px;top:707px;width:44px;background:#e8e8f1"></div>
<div class="c r" style="left:886px;top:707px;width:44px;background:#e8e8f1"></div>
<div class="c r" style="left:931px;top:707px;width:44px;background:#e8e8f1"></div>
<div class="c r" style="left:976px;top:707px;width:44px;background:#e8e8f1"></div>
<div class="c" style="left:1021px;top:707px;width:293px;background:#ffffff">Abgang</div>
<div class="c" style="left:1315px;top:707px;width:71px;background:#e8e8f1;padding-left:1px"></div>
<div class="c" style="left:1387px;top:707px;width:71px;background:#e8e8f1;padding-left:1px"></div>
<div class="c" style="left:1459px;top:707px;width:56px;background:#e8e8f1"></div>
<div class="hl" style="left:12px;top:724px;width:1524px"></div>
<div class="a" style="left:1516px;top:707px;width:19px;height:17px;border:1px solid #1c4280;border-radius:3px;background:linear-gradient(172deg,#f6f8ff 4%,#c6d6f7 42%,#9ab6ee 86%,#c4d6fa)"></div>
<svg class="a" style="left:1518px;top:708px" width="16" height="15" viewBox="0 0 16 15"><path d="M3.100 2.200L12.900 12M12.900 2.200L3.100 12" stroke="#ff8890" stroke-width="3.200" stroke-linecap="round" fill="none" opacity=".8"/><path d="M3.300 2.400L12.700 11.800M12.700 2.400L3.300 11.800" stroke="#f6363e" stroke-width="2.300" stroke-linecap="round" fill="none"/></svg>
<div class="c r" style="left:12px;top:725px;width:39px;background:#c9d8f6">16</div>
<div class="c" style="left:52px;top:725px;width:230px;background:#eaf0ff">Lob / Preis</div>
<div class="c" style="left:283px;top:725px;width:283px;background:#eaf0ff">Lob / Preis</div>
<div class="c" style="left:567px;top:725px;width:273px;background:#c9d8f6"></div>
<div class="c r" style="left:841px;top:725px;width:44px;background:#c9d8f6"></div>
<div class="c r" style="left:886px;top:725px;width:44px;background:#c9d8f6"></div>
<div class="c r" style="left:931px;top:725px;width:44px;background:#c9d8f6"></div>
<div class="c r" style="left:976px;top:725px;width:44px;background:#c9d8f6"></div>
<div class="c" style="left:1021px;top:725px;width:293px;background:#eaf0ff">Lob / Preis</div>
<div class="c" style="left:1315px;top:725px;width:71px;background:#c9d8f6;padding-left:1px"></div>
<div class="c" style="left:1387px;top:725px;width:71px;background:#c9d8f6;padding-left:1px"></div>
<div class="c" style="left:1459px;top:725px;width:56px;background:#c9d8f6"></div>
<div class="hl" style="left:12px;top:742px;width:1524px"></div>
<div class="a" style="left:1516px;top:725px;width:19px;height:17px;border:1px solid #1c4280;border-radius:3px;background:linear-gradient(172deg,#f6f8ff 4%,#c6d6f7 42%,#9ab6ee 86%,#c4d6fa)"></div>
<svg class="a" style="left:1518px;top:726px" width="16" height="15" viewBox="0 0 16 15"><path d="M3.100 2.200L12.900 12M12.900 2.200L3.100 12" stroke="#ff8890" stroke-width="3.200" stroke-linecap="round" fill="none" opacity=".8"/><path d="M3.300 2.400L12.700 11.800M12.700 2.400L3.300 11.800" stroke="#f6363e" stroke-width="2.300" stroke-linecap="round" fill="none"/></svg>
<div class="c r" style="left:12px;top:743px;width:39px;background:#e8e8f1">17</div>
<div class="c" style="left:52px;top:743px;width:230px;background:#ffffff">Durchschnitt 1</div>
<div class="c" style="left:283px;top:743px;width:283px;background:#ffffff">Durchschnitt 1</div>
<div class="c" style="left:567px;top:743px;width:273px;background:#e8e8f1"></div>
<div class="c r" style="left:841px;top:743px;width:44px;background:#e8e8f1"></div>
<div class="c r" style="left:886px;top:743px;width:44px;background:#e8e8f1"></div>
<div class="c r" style="left:931px;top:743px;width:44px;background:#e8e8f1"></div>
<div class="c r" style="left:976px;top:743px;width:44px;background:#e8e8f1"></div>
<div class="c" style="left:1021px;top:743px;width:293px;background:#ffffff">Durchschnitt 1</div>
<div class="c" style="left:1315px;top:743px;width:71px;background:#e8e8f1;padding-left:1px"></div>
<div class="c" style="left:1387px;top:743px;width:71px;background:#e8e8f1;padding-left:1px"></div>
<div class="c" style="left:1459px;top:743px;width:56px;background:#e8e8f1"></div>
<div class="hl" style="left:12px;top:760px;width:1524px"></div>
<div class="a" style="left:1516px;top:743px;width:19px;height:17px;border:1px solid #1c4280;border-radius:3px;background:linear-gradient(172deg,#f6f8ff 4%,#c6d6f7 42%,#9ab6ee 86%,#c4d6fa)"></div>
<svg class="a" style="left:1518px;top:744px" width="16" height="15" viewBox="0 0 16 15"><path d="M3.100 2.200L12.900 12M12.900 2.200L3.100 12" stroke="#ff8890" stroke-width="3.200" stroke-linecap="round" fill="none" opacity=".8"/><path d="M3.300 2.400L12.700 11.800M12.700 2.400L3.300 11.800" stroke="#f6363e" stroke-width="2.300" stroke-linecap="round" fill="none"/></svg>
<div class="c r" style="left:12px;top:761px;width:39px;background:#c9d8f6"></div>
<div class="c" style="left:52px;top:761px;width:230px;background:#c9d8f6"></div>
<div class="c" style="left:283px;top:761px;width:283px;background:#c9d8f6"></div>
<div class="c" style="left:567px;top:761px;width:273px;background:#c9d8f6"></div>
<div class="c r" style="left:841px;top:761px;width:44px;background:#c9d8f6"></div>
<div class="c r" style="left:886px;top:761px;width:44px;background:#c9d8f6"></div>
<div class="c r" style="left:931px;top:761px;width:44px;background:#c9d8f6"></div>
<div class="c r" style="left:976px;top:761px;width:44px;background:#c9d8f6"></div>
<div class="c" style="left:1021px;top:761px;width:293px;background:#c9d8f6"></div>
<div class="c" style="left:1315px;top:761px;width:71px;background:#c9d8f6;padding-left:1px"></div>
<div class="c" style="left:1387px;top:761px;width:71px;background:#c9d8f6;padding-left:1px"></div>
<div class="c" style="left:1459px;top:761px;width:56px;background:#c9d8f6"></div>
<div class="hl" style="left:12px;top:778px;width:1524px"></div>
<div class="a" style="left:1516px;top:761px;width:19px;height:17px;border:1px solid #d6d6dc;border-radius:3px;background:linear-gradient(#ffffff,#ececf0)"></div>
<svg class="a" style="left:1518px;top:762px" width="16" height="15" viewBox="0 0 16 15"><path d="M3.100 2.200L12.900 12M12.900 2.200L3.100 12" stroke="#8c8c8c" stroke-width="2.700" stroke-linecap="round" fill="none"/></svg>
<div class="vl" style="left:51px;top:455px;height:324px"></div>
<div class="vl" style="left:282px;top:455px;height:324px"></div>
<div class="vl" style="left:566px;top:455px;height:324px"></div>
<div class="vl" style="left:840px;top:455px;height:324px"></div>
<div class="vl" style="left:885px;top:455px;height:324px"></div>
<div class="vl" style="left:930px;top:455px;height:324px"></div>
<div class="vl" style="left:975px;top:455px;height:324px"></div>
<div class="vl" style="left:1020px;top:455px;height:324px"></div>
<div class="vl" style="left:1314px;top:455px;height:324px"></div>
<div class="vl" style="left:1386px;top:455px;height:324px"></div>
<div class="vl" style="left:1458px;top:455px;height:324px"></div>
<div class="vl" style="left:1515px;top:455px;height:324px"></div>
<div class="a" style="left:1536px;top:455px;width:17px;height:340px;background:#fafaff"></div>
<div class="a" style="left:1539px;top:456px;width:12px;height:15px;background:linear-gradient(#fbfbfd,#e3e3e7)"></div>
<svg class="a" style="left:1539px;top:456px" width="12" height="15" viewBox="0 0 12 15"><path d="M1.300 10L5.500 6L9.700 10" stroke="#c6c6c8" stroke-width="2.200" fill="none"/></svg>
<div class="a" style="left:1536px;top:421px;width:17px;height:34px;border:1px solid #1c4280;border-radius:3px;background:linear-gradient(#fcfcfe,#ececf4 45%,#c8c8d8)"></div>
<svg class="a" style="left:1540px;top:433px" width="10" height="11" viewBox="0 0 10 11"><path d="M0.5 0.5H8.5V6M0.5 0.5V8.5H3M0.5 3.5H8.5M4.5 0.5V6" stroke="#111" stroke-width="1" fill="none"/><path d="M3 7H10L6.5 10.5Z" fill="#111"/></svg>
<div class="red" style="left:279px;top:544px;width:562px;height:56px"></div>
<div class="red" style="left:279px;top:598px;width:607px;height:20px"></div>
<div class="red" style="left:1313px;top:421px;width:73px;height:198px"></div>
</body></html>
